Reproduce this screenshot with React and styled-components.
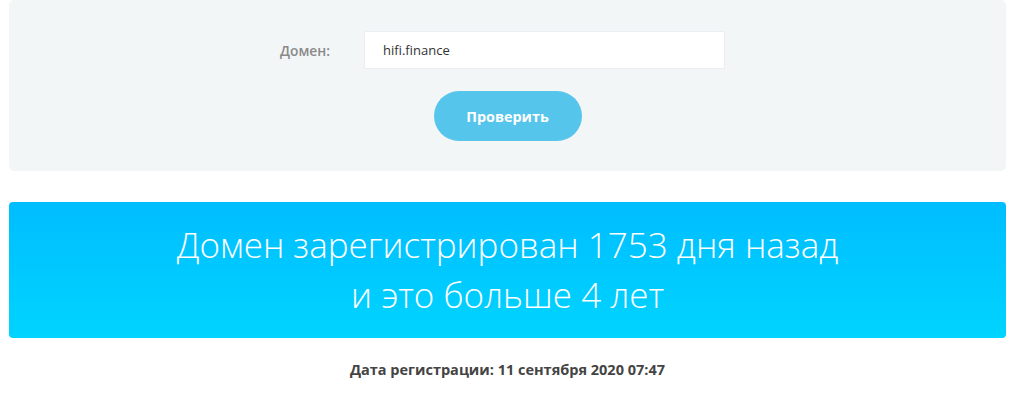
import styled, { createGlobalStyle } from 'styled-components';

const GlobalStyle = createGlobalStyle`
  html, body {
    margin: 0;
    padding: 0;
    background: #fff;
    font-family: "Open Sans", "Liberation Sans", sans-serif;
  }
`;

const Page = styled.div`
  padding: 0 18px 0 9px;
`;

const CheckForm = styled.form`
  background: #f3f6f7;
  border-radius: 5px;
  height: 171px;
  box-sizing: border-box;
  padding-top: 31px;
  display: flex;
  flex-direction: column;
  align-items: center;
`;

const FieldRow = styled.div`
  display: flex;
  align-items: center;
  padding-right: 10px;
`;

const Label = styled.label`
  width: 84px;
  font-size: 13.8px;
  font-weight: 600;
  color: #8a8a8a;
`;

const Input = styled.input`
  width: 361px;
  height: 38px;
  box-sizing: border-box;
  border: 1px solid #ebeef0;
  border-radius: 2px;
  background: #fff;
  padding: 0 18px;
  font-family: "Open Sans", "Liberation Sans", sans-serif;
  font-size: 13px;
  color: #333;
  outline: none;
`;

const SubmitButton = styled.button`
  margin-top: 22px;
  width: 148px;
  height: 50px;
  border: none;
  border-radius: 25px;
  background: #56c5ec;
  color: #fff;
  font-family: "Open Sans", "Liberation Sans", sans-serif;
  font-size: 14.4px;
  font-weight: 700;
  cursor: pointer;
`;

const ResultBox = styled.div`
  margin-top: 31px;
  height: 136px;
  border-radius: 4px;
  background: linear-gradient(180deg, #00bdff 0%, #00d4ff 100%);
  display: flex;
  flex-direction: column;
  align-items: center;
  justify-content: center;
  color: #fff;
  font-size: 35px;
  font-weight: 300;
  line-height: 50px;
  text-align: center;
`;

const RegDate = styled.p`
  margin: 22px 0 0;
  text-align: center;
  font-size: 14.5px;
  font-weight: 700;
  color: #444;
`;

export default function App() {
  return (
    <Page>
      <GlobalStyle />
      <CheckForm onSubmit={(e) => e.preventDefault()}>
        <FieldRow>
          <Label htmlFor="domain">Домен:</Label>
          <Input id="domain" defaultValue="hifi.finance" />
        </FieldRow>
        <SubmitButton type="submit">Проверить</SubmitButton>
      </CheckForm>
      <ResultBox>
        <div>Домен зарегистрирован 1753 дня назад</div>
        <div>и это больше 4 лет</div>
      </ResultBox>
      <RegDate>Дата регистрации: 11 сентября 2020 07:47</RegDate>
    </Page>
  );
}
